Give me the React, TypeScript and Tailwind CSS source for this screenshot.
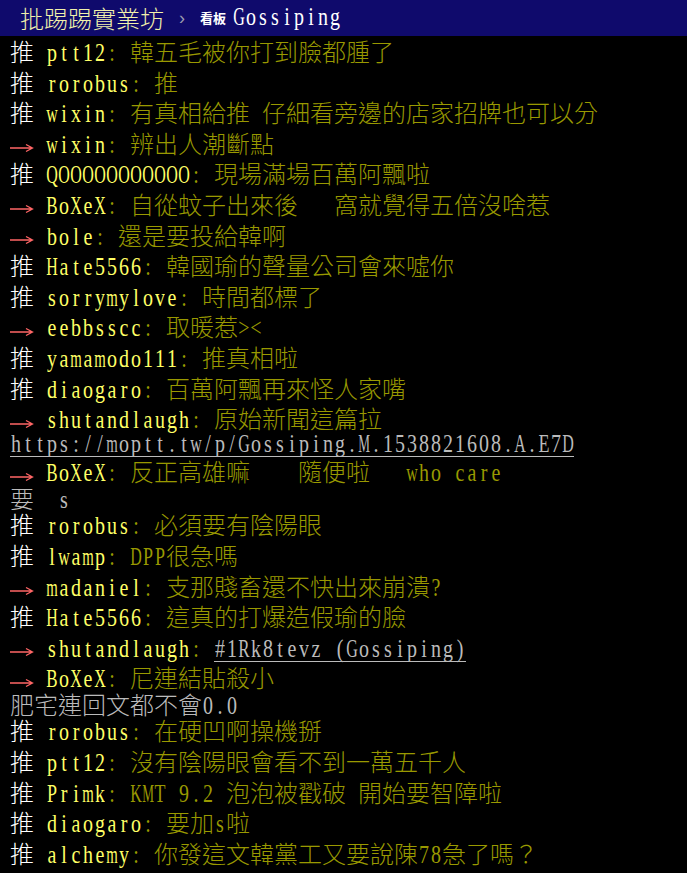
import React from "react";

const CJK =
  "inline-block whitespace-pre text-[24px] leading-[20px] font-light font-['Noto_Sans_CJK_TC',sans-serif]";

const SX: Record<string, string> = {
  m: "scale-x-[0.74]",
  w: "scale-x-[0.8]",
  M: "scale-x-[0.66]",
  W: "scale-x-[0.62]",
  O: "scale-x-[0.8]",
  Q: "scale-x-[0.8]",
  G: "scale-x-[0.8]",
  H: "scale-x-[0.8]",
  D: "scale-x-[0.8]",
  K: "scale-x-[0.8]",
  X: "scale-x-[0.8]",
  A: "scale-x-[0.8]",
  N: "scale-x-[0.8]",
  U: "scale-x-[0.8]",
  C: "scale-x-[0.85]",
  B: "scale-x-[0.85]",
  R: "scale-x-[0.85]",
  P: "scale-x-[0.9]",
  E: "scale-x-[0.9]",
  T: "scale-x-[0.9]",
};

function Lat({ text, cls = "" }: { text: string; cls?: string }) {
  return (
    <span className={"whitespace-pre font-['Liberation_Serif',serif] text-[20px] leading-[12px] " + cls}>
      {[...text].map((ch, i) =>
        ch === " " ? (
          <span key={i} className="inline-block w-[12px]" />
        ) : (
          <span
            key={i}
            className={"inline-flex justify-center w-[12px] origin-[50%_12.75px] scale-y-[1.3] " + (SX[ch] ?? "")}
          >
            {ch}
          </span>
        )
      )}
    </span>
  );
}

function Mixed({ text, color, link = false }: { text: string; color: string; link?: boolean }) {
  const parts = text.match(/[\x20-\x7e]+|[^\x20-\x7e]+/g) || [];
  return (
    <>
      {parts.map((p, i) =>
        /^[\x20-\x7e]/.test(p) ? (
          <Lat key={i} text={p} cls={color + (link ? " border-b border-[#bbbbbb]" : "")} />
        ) : (
          <span key={i} className={CJK + " " + color}>
            {p}
          </span>
        )
      )}
    </>
  );
}

type Row =
  | { kind: "push"; tag: "推" | "→"; user: string; content: string; link?: string }
  | { kind: "plain"; text: string; link?: boolean };

const rows: Row[] = [
  { kind: "push", tag: "推", user: "ptt12", content: ": 韓五毛被你打到臉都腫了" },
  { kind: "push", tag: "推", user: "rorobus", content: ": 推" },
  { kind: "push", tag: "推", user: "wixin", content: ": 有真相給推 仔細看旁邊的店家招牌也可以分" },
  { kind: "push", tag: "→", user: "wixin", content: ": 辨出人潮斷點" },
  { kind: "push", tag: "推", user: "QOOOOOOOOOOO", content: ": 現場滿場百萬阿飄啦" },
  { kind: "push", tag: "→", user: "BoXeX", content: ": 自從蚊子出來後   窩就覺得五倍沒啥惹" },
  { kind: "push", tag: "→", user: "bole", content: ": 還是要投給韓啊" },
  { kind: "push", tag: "推", user: "Hate5566", content: ": 韓國瑜的聲量公司會來噓你" },
  { kind: "push", tag: "推", user: "sorrymylove", content: ": 時間都標了" },
  { kind: "push", tag: "→", user: "eebbsscc", content: ": 取暖惹><" },
  { kind: "push", tag: "推", user: "yamamodo111", content: ": 推真相啦" },
  { kind: "push", tag: "推", user: "diaogaro", content: ": 百萬阿飄再來怪人家嘴" },
  { kind: "push", tag: "→", user: "shutandlaugh", content: ": 原始新聞這篇拉" },
  { kind: "plain", text: "https://moptt.tw/p/Gossiping.M.1538821608.A.E7D", link: true },
  { kind: "push", tag: "→", user: "BoXeX", content: ": 反正高雄嘛    隨便啦   who care" },
  { kind: "plain", text: "要  s" },
  { kind: "push", tag: "推", user: "rorobus", content: ": 必須要有陰陽眼" },
  { kind: "push", tag: "推", user: "lwamp", content: ": DPP很急嗎" },
  { kind: "push", tag: "→", user: "madaniel", content: ": 支那賤畜還不快出來崩潰?" },
  { kind: "push", tag: "推", user: "Hate5566", content: ": 這真的打爆造假瑜的臉" },
  { kind: "push", tag: "→", user: "shutandlaugh", content: ": ", link: "#1Rk8tevz (Gossiping)" },
  { kind: "push", tag: "→", user: "BoXeX", content: ": 尼連結貼殺小" },
  { kind: "plain", text: "肥宅連回文都不會0.0" },
  { kind: "push", tag: "推", user: "rorobus", content: ": 在硬凹啊操機掰" },
  { kind: "push", tag: "推", user: "ptt12", content: ": 沒有陰陽眼會看不到一萬五千人" },
  { kind: "push", tag: "推", user: "Primk", content: ": KMT 9.2 泡泡被戳破 開始要智障啦" },
  { kind: "push", tag: "推", user: "diaogaro", content: ": 要加s啦" },
  { kind: "push", tag: "推", user: "alchemy", content: ": 你發這文韓黨工又要說陳78急了嗎？" },
];

function Arrow() {
  return (
    <span className="inline-block w-[36px] align-middle">
      <svg width="24" height="24" viewBox="0 0 24 24" className="block">
        <path d="M0 14 H22.5 M16 10.5 L22.5 14 L16 17.5" fill="none" stroke="#ff6666" strokeWidth="1.3" />
      </svg>
    </span>
  );
}

export default function App() {
  return (
    <div className="w-full min-h-[873px] bg-black">
      <div className="h-[36px] bg-[#0f0a6c] flex items-center pl-[20px] whitespace-pre">
        <span className={CJK + " text-[#f1f1ab]"}>批踢踢實業坊</span>
        <span className="inline-block w-[36px] text-center text-[18px] text-[#9a9ab0] font-['Liberation_Sans',sans-serif]">
          ›
        </span>
        <span className="text-[13px] font-bold text-white font-['Noto_Sans_CJK_TC',sans-serif] mr-[7px]">看板</span>
        <Lat text="Gossiping" cls="text-white" />
      </div>
      <div className="px-[10px] text-[24px] font-['Noto_Sans_CJK_TC',sans-serif]">
        {rows.map((r, i) =>
          r.kind === "push" ? (
            <div key={i} className="h-[30.6px] leading-[30.6px] whitespace-pre">
              {r.tag === "推" ? (
                <span className={CJK + " w-[36px] text-white"}>推</span>
              ) : (
                <Arrow />
              )}
              <Lat text={r.user} cls="text-[#ffff66]" />
              <Mixed text={r.content} color="text-[#999900]" />
              {r.link ? <Mixed text={r.link} color="text-[#bbbbbb]" link /> : null}
            </div>
          ) : r.link ? (
            <div key={i} className="h-[22.5px] leading-[22.5px] whitespace-pre font-['Liberation_Serif',serif] text-[20px]">
              <Mixed text={r.text} color="text-[#bbbbbb]" link />
            </div>
          ) : (
            <div key={i} className="h-[22.5px] leading-[22.5px] whitespace-pre">
              <Mixed text={r.text} color="text-[#bbbbbb]" />
            </div>
          )
        )}
      </div>
    </div>
  );
}
